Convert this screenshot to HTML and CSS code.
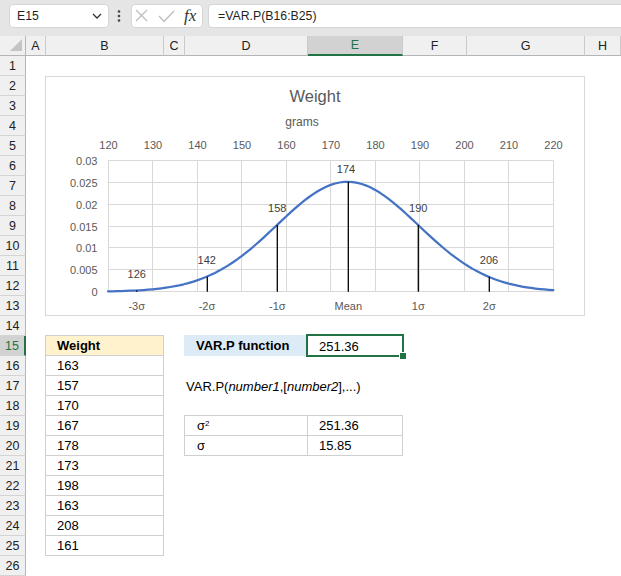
FILE: index.html
```html
<!DOCTYPE html>
<html>
<head>
<meta charset="utf-8">
<link rel="stylesheet" href="styles.css">
</head>
<body>
<div class="app">
  <div class="toolbar">
    <div class="namebox"><span>E15</span><svg class="chev" width="10" height="8" viewBox="0 0 10 8"><path d="M1 2 L5 6 L9 2" fill="none" stroke="#333" stroke-width="1.3"/></svg></div>
    <svg class="more" width="22" height="24" viewBox="0 0 22 24"><circle cx="10" cy="7.5" r="1.3" fill="#444"/><circle cx="10" cy="12" r="1.3" fill="#444"/><circle cx="10" cy="16.5" r="1.3" fill="#444"/></svg>
    <div class="fxbox">
      <svg class="icons" width="46" height="22" viewBox="0 0 46 22"><path d="M4 5 L15 16 M15 5 L4 16" stroke="#bdbdbd" stroke-width="1.3" fill="none"/><path d="M27 11 L32 16.5 L42 6" stroke="#bdbdbd" stroke-width="1.3" fill="none"/></svg>
      <span class="fx">fx</span>
    </div>
    <div class="formula">=VAR.P(B16:B25)</div>
  </div>
  <div class="sheet">
    <div class="row colhdr">
      <div class="corner"><svg width="25" height="19" viewBox="0 0 25 19"><path d="M22 3 L22 15 L10 15 Z" fill="#c4c4c4"/></svg></div>
      <div class="ch">A</div><div class="ch">B</div><div class="ch">C</div><div class="ch">D</div><div class="ch selc">E</div><div class="ch">F</div><div class="ch">G</div><div class="ch">H</div>
    </div>
    <div class="row"><div class="rh">1</div></div>
    <div class="row"><div class="rh">2</div></div>
    <div class="row"><div class="rh">3</div></div>
    <div class="row"><div class="rh">4</div></div>
    <div class="row"><div class="rh">5</div></div>
    <div class="row"><div class="rh">6</div></div>
    <div class="row"><div class="rh">7</div></div>
    <div class="row"><div class="rh">8</div></div>
    <div class="row"><div class="rh">9</div></div>
    <div class="row"><div class="rh">10</div></div>
    <div class="row"><div class="rh">11</div></div>
    <div class="row"><div class="rh">12</div></div>
    <div class="row"><div class="rh">13</div></div>
    <div class="row"><div class="rh">14</div></div>
    <div class="row"><div class="rh selr">15</div><div></div><div class="c tb tbtop hdr">Weight</div><div></div><div class="c lbl">VAR.P function</div><div class="c selcell">251.36</div></div>
    <div class="row"><div class="rh">16</div><div></div><div class="c tb">163</div></div>
    <div class="row"><div class="rh">17</div><div></div><div class="c tb">157</div><div></div><div class="c syn">VAR.P(<i>number1</i>,[<i>number2</i>],...)</div></div>
    <div class="row"><div class="rh">18</div><div></div><div class="c tb">170</div></div>
    <div class="row"><div class="rh">19</div><div></div><div class="c tb">167</div><div></div><div class="c t2 t2l t2t">σ<sup>2</sup></div><div class="c t2 t2t">251.36</div></div>
    <div class="row"><div class="rh">20</div><div></div><div class="c tb">178</div><div></div><div class="c t2 t2l">σ</div><div class="c t2">15.85</div></div>
    <div class="row"><div class="rh">21</div><div></div><div class="c tb">173</div></div>
    <div class="row"><div class="rh">22</div><div></div><div class="c tb">198</div></div>
    <div class="row"><div class="rh">23</div><div></div><div class="c tb">163</div></div>
    <div class="row"><div class="rh">24</div><div></div><div class="c tb">208</div></div>
    <div class="row"><div class="rh">25</div><div></div><div class="c tb">161</div></div>
    <div class="row"><div class="rh">26</div></div>

    <div class="chart">
      <svg width="540" height="240" viewBox="45 76 540 240">
        <rect x="45.5" y="76.5" width="539" height="239" fill="#fff" stroke="#d9d9d9"/>
        <text class="title" x="315" y="102" text-anchor="middle">Weight</text>
        <text class="axtitle" x="302" y="126" text-anchor="middle">grams</text>
        <g stroke="#d9d9d9" stroke-width="1" fill="none">
          <path d="M108 160.5 H553.5 M108 182.5 H553.5 M108 204.5 H553.5 M108 226.5 H553.5 M108 247.5 H553.5 M108 269.5 H553.5 M108 291.5 H553.5"/>
          <path d="M108.5 160.5 V291.5 M152.5 160.5 V291.5 M197.5 160.5 V291.5 M241.5 160.5 V291.5 M286.5 160.5 V291.5 M330.5 160.5 V291.5 M375.5 160.5 V291.5 M419.5 160.5 V291.5 M464.5 160.5 V291.5 M508.5 160.5 V291.5 M553.5 160.5 V291.5"/>
        </g>
        <g class="ax" text-anchor="middle">
          <text x="108.5" y="148.5">120</text>
          <text x="153" y="148.5">130</text>
          <text x="197.5" y="148.5">140</text>
          <text x="242" y="148.5">150</text>
          <text x="286.5" y="148.5">160</text>
          <text x="331" y="148.5">170</text>
          <text x="375.5" y="148.5">180</text>
          <text x="420" y="148.5">190</text>
          <text x="464.5" y="148.5">200</text>
          <text x="509" y="148.5">210</text>
          <text x="553.5" y="148.5">220</text>
        </g>
        <g class="ax" text-anchor="end">
          <text x="97.5" y="164.5">0.03</text>
          <text x="97.5" y="186.5">0.025</text>
          <text x="97.5" y="208.5">0.02</text>
          <text x="97.5" y="230.5">0.015</text>
          <text x="97.5" y="251.5">0.01</text>
          <text x="97.5" y="273.5">0.005</text>
          <text x="97.5" y="295.5">0</text>
        </g>
        <path id="curve" d="" fill="none" stroke="#4472c4" stroke-width="2.25" stroke-linejoin="round" stroke-linecap="round"/>
        <g stroke="#000" stroke-width="1.3">
          <path d="M136.7 290.4 V291.7"/>
          <path d="M207.3 276.7 V291.7"/>
          <path d="M277.3 225 V291.7"/>
          <path d="M348.3 181.7 V291.7"/>
          <path d="M418.3 225 V291.7"/>
          <path d="M489.3 276.7 V291.7"/>
        </g>
        <g class="dl" text-anchor="middle">
          <text x="136.7" y="278.3">126</text>
          <text x="206.7" y="264">142</text>
          <text x="277.3" y="212.3">158</text>
          <text x="346" y="173.3">174</text>
          <text x="418.3" y="212.3">190</text>
          <text x="489" y="264">206</text>
        </g>
        <g class="ax" text-anchor="middle">
          <text x="136.7" y="309.7">-3σ</text>
          <text x="207" y="309.7">-2σ</text>
          <text x="277.3" y="309.7">-1σ</text>
          <text x="348.3" y="309.7">Mean</text>
          <text x="418.3" y="309.7">1σ</text>
          <text x="489.3" y="309.7">2σ</text>
        </g>
      </svg>
    </div>
  </div>
</div>
<script src="script.js"></script>
</body>
</html>
```

FILE: styles.css
```css
* { box-sizing: border-box; margin: 0; padding: 0; }
html, body { width: 621px; height: 576px; overflow: hidden; background: #fff; }
body { font-family: "Liberation Sans", Arial, sans-serif; color: #000; }

.toolbar {
  height: 36px;
  background: #e5e5e5;
  display: flex;
  align-items: flex-start;
  padding: 4px 0 0 9px;
}
.namebox {
  width: 100px; height: 24px;
  background: #fff;
  border: 1px solid #d6d6d6;
  border-radius: 4px;
  display: flex; align-items: center; justify-content: space-between;
  padding: 0 6px 0 7px;
  font-size: 12.3px; color: #1f1f1f;
}
.more { flex: none; }
.fxbox {
  width: 72px; height: 24px;
  background: #fff;
  border: 1px solid #d6d6d6;
  border-radius: 4px;
  display: flex; align-items: center;
}
.icons { flex: none; }
.fx {
  margin-left: 6px;
  font-family: "Liberation Serif", serif;
  font-style: italic;
  font-size: 17px;
  color: #333;
}
.formula {
  flex: 1; height: 24px;
  margin-left: 5px;
  background: #fff;
  border: 1px solid #d6d6d6;
  border-right: none;
  border-radius: 4px 0 0 4px;
  padding-left: 9px;
  display: flex; align-items: center;
  font-size: 12.3px; color: #1f1f1f;
}

.sheet { position: relative; }
.row {
  display: grid;
  grid-template-columns: 26px 20px 118px 21px 123px 95px 64px 118px 1fr;
  height: 20px;
}
.colhdr { background: #f0f0f0; }
.corner { border-right: 1px solid #b5b5b5; border-bottom: 1px solid #b5b5b5; }
.corner svg { display: block; }
.ch {
  border-right: 1px solid #cacaca;
  border-bottom: 1px solid #b5b5b5;
  display: flex; align-items: center; justify-content: center;
  font-size: 12.5px; color: #222;
}
.ch.selc {
  background: #d2d2d2;
  color: #217346;
  border-bottom: 2px solid #217346;
}
.rh {
  background: #f0f0f0;
  border-right: 1px solid #b5b5b5;
  border-bottom: 1px solid #d4d4d4;
  display: flex; align-items: center; justify-content: center;
  font-size: 12.5px; color: #222;
}
.rh.selr {
  background: #d2d2d2;
  color: #217346;
  border-right: 2px solid #217346;
}

.c {
  display: flex; align-items: center;
  padding-left: 11px;
  font-size: 13px;
  white-space: nowrap;
}
.tb {
  margin-left: -1px;
  border-left: 1px solid #d0d0d0;
  border-right: 1px solid #d0d0d0;
  border-bottom: 1px solid #d0d0d0;
}
.tbtop { margin-top: -1px; border-top: 1px solid #d0d0d0; }
.hdr { background: #fff2cc; font-weight: bold; }
.lbl {
  margin-left: -1px; margin-top: -1px;
  background: #ddebf7;
  font-weight: bold;
  padding-left: 12px;
}
.selcell { position: relative; z-index: 3; }
.selcell::after {
  content: "";
  position: absolute;
  left: -2px; top: -2px; right: -1px; bottom: -1px;
  border: 2px solid #217346;
}
.selcell::before {
  content: "";
  position: absolute;
  right: -4px; bottom: -4px;
  width: 6px; height: 6px;
  background: #217346;
  border: 1px solid #fff;
  z-index: 1;
}
.syn { padding-left: 1px; overflow: visible; }
.t2 {
  border-right: 1px solid #d0d0d0;
  border-bottom: 1px solid #d0d0d0;
}
.t2l { margin-left: -1px; border-left: 1px solid #d0d0d0; padding-left: 12px; }
.t2t { margin-top: -1px; border-top: 1px solid #d0d0d0; }
sup { font-size: 8px; position: relative; top: -2px; }

.chart {
  position: absolute;
  left: 45px; top: 40px;
  width: 540px; height: 240px;
  z-index: 2;
}
.chart svg { display: block; font-family: "Liberation Sans", Arial, sans-serif; }
.title { font-size: 16.5px; fill: #595959; }
.axtitle { font-size: 12px; fill: #595959; }
.ax { font-size: 11px; fill: #595959; }
.dl { font-size: 11px; fill: #404040; }
```

FILE: script.js
```js
(function () {
  var p = document.getElementById('curve');
  var mean = 173.8, sd = 15.85, d = '';
  for (var v = 120; v <= 220.001; v += 1) {
    var z = (v - mean) / sd;
    var pdf = Math.exp(-0.5 * z * z) / (sd * Math.sqrt(2 * Math.PI));
    var x = 108 + (v - 120) * 4.453;
    var y = 291.7 - pdf / 0.03 * 131;
    d += (v === 120 ? 'M' : 'L') + x.toFixed(2) + ' ' + y.toFixed(2) + ' ';
  }
  p.setAttribute('d', d);
})();
```
